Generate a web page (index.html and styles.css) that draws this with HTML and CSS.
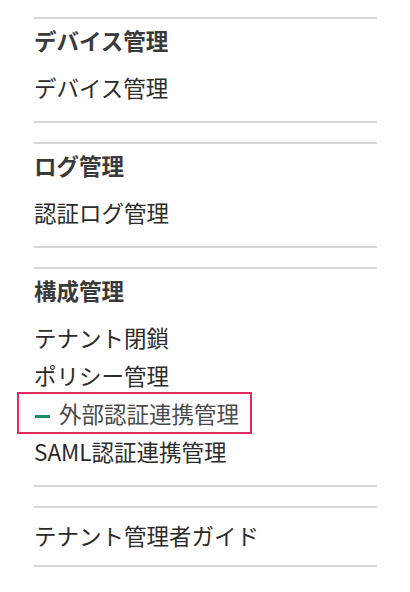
FILE: index.html
```
<!DOCTYPE html>
<html lang="ja">
<head>
    <meta charset="UTF-8">
    <meta name="viewport" content="width=device-width, initial-scale=1.0">
    <title>テナント管理メニュー</title>
    <link rel="stylesheet" href="styles.css">
</head>
<body>

<nav id="side-menu">
    <div class="menu-group">
        <h2 class="menu-title">デバイス管理</h2>
        <ul class="menu-list">
            <li><a href="#">デバイス管理</a></li>
        </ul>
    </div>

    <div class="menu-group">
        <h2 class="menu-title">ログ管理</h2>
        <ul class="menu-list">
            <li><a href="#">認証ログ管理</a></li>
        </ul>
    </div>

    <div class="menu-group">
        <h2 class="menu-title">構成管理</h2>
        <ul class="menu-list">
            <li><a href="#">テナント閉鎖</a></li>
            <li><a href="#">ポリシー管理</a></li>
            <li class="current"><a href="#"><span class="mark"></span>外部認証連携管理</a></li>
            <li><a href="#">SAML認証連携管理</a></li>
        </ul>
    </div>

    <div class="menu-group no-title">
        <ul class="menu-list">
            <li><a href="#">テナント管理者ガイド</a></li>
        </ul>
    </div>
</nav>

</body>
</html>
```

FILE: styles.css
```
body {
    margin: 0;
    background: #ffffff;
    color: #2b2b2b;
    font-family: "Noto Sans CJK JP", "Noto Sans", sans-serif;
}
#side-menu {
    padding: 17px 33px 0 34px;
}
.menu-group {
    border-top: 2px solid #d6d6d6;
    border-bottom: 2px solid #d6d6d6;
    padding: 6px 0 15px;
    margin-bottom: 19px;
}
.menu-group.no-title {
    padding: 8px 0 11px;
}
.menu-title {
    margin: 0 0 13px;
    font-size: 22.5px;
    line-height: 30px;
    font-weight: bold;
    color: #3a3a3a;
}
.menu-list {
    list-style: none;
    margin: 0;
    padding: 0;
}
.menu-list li {
    font-size: 22.5px;
    line-height: 38px;
}
.menu-list a {
    color: #2b2b2b;
    text-decoration: none;
}
/* selected page: framed, with a green bar in front */
.menu-list .current a {
    display: inline-block;
    margin-left: -15px;
    padding: 0 11px 0 14px;
    outline: 2px solid #e3285f;
    color: #4a4a4a;
}
.mark {
    display: inline-block;
    width: 15px;
    height: 3px;
    margin: 0 9px 0 2px;
    vertical-align: middle;
    background: #1f8a68;
}
```
